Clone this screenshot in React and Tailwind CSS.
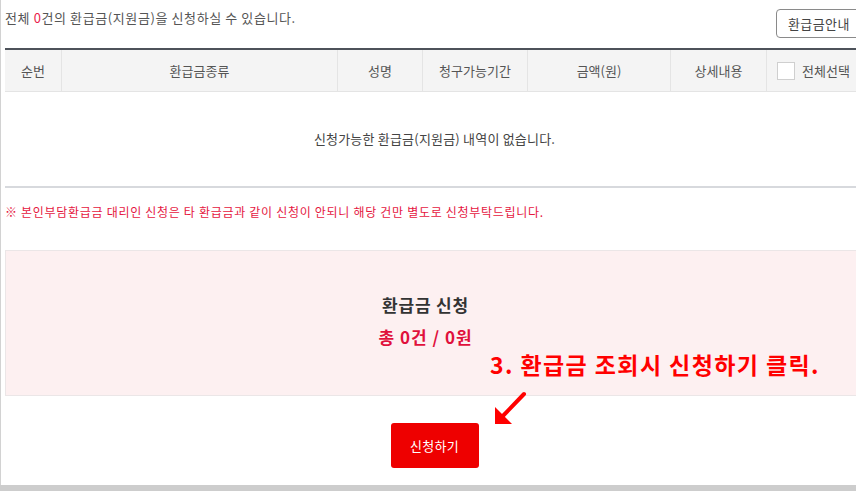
import React from "react";

const font = { fontFamily: '"Noto Sans CJK KR", "Noto Sans", sans-serif' };

export default function App() {
  return (
    <div className="relative w-[856px] h-[491px] overflow-hidden bg-[#cdcdcd] text-[#555]" style={font}>
      <div className="w-[900px] h-[485px] bg-white border-l-[1px] border-[#d2d2d2] pl-[4px]">
        <div className="w-[859px]">
          {/* top row */}
          <div className="flex justify-between items-start h-[38px]">
            <div className="pt-[8px] text-[13px] leading-[20px] tracking-[0.6px] text-[#555]">
              전체 <span className="text-[#ea1c4b]">0</span>건의 환급금(지원금)을 신청하실 수 있습니다.
            </div>
            <div className="mt-[9px] mr-[-12px] h-[29px] w-[100px] border border-[#8a8a8a] rounded-[4px] text-[13px] leading-[27px] pl-[11px] tracking-[0.4px] text-[#444]">
              환급금안내
            </div>
          </div>

          {/* table */}
          <div className="mt-[10px] border-t-2 border-[#4d525a]">
            <div className="flex h-[42px] bg-[#f4f4f4] border-b border-[#e4e4e4] text-[13px] text-[#555]">
              <div className="w-[57px] flex items-center justify-center border-r border-[#e4e4e4]">순번</div>
              <div className="w-[276px] flex items-center justify-center border-r border-[#e4e4e4]">환급금종류</div>
              <div className="w-[85px] flex items-center justify-center border-r border-[#e4e4e4]">성명</div>
              <div className="w-[105px] flex items-center justify-center border-r border-[#e4e4e4]">청구가능기간</div>
              <div className="w-[143px] flex items-center justify-center border-r border-[#e4e4e4]">금액(원)</div>
              <div className="w-[96px] flex items-center justify-center border-r border-[#e4e4e4]">상세내용</div>
              <div className="flex-1 flex items-center pl-[10px]">
                <span className="inline-block w-[18px] h-[18px] bg-white border border-[#cfcfcf] mr-[7px]"></span>
                전체선택
              </div>
            </div>
            <div className="h-[96px] flex items-center justify-center text-[13px] tracking-[0.2px] text-[#444] border-b-2 border-[#d7d9dd]">
              신청가능한 환급금(지원금) 내역이 없습니다.
            </div>
          </div>

          {/* notice */}
          <div className="mt-[15px] text-[12px] leading-[18px] text-[#e5173f] tracking-[0.7px]">
            ※ 본인부담환급금 대리인 신청은 타 환급금과 같이 신청이 안되니 해당 건만 별도로 신청부탁드립니다.
          </div>

          {/* pink box */}
          <div className="mt-[29px] h-[146px] bg-[#fdf0f1] border border-[#ebe6e7] pt-[42px] flex flex-col items-center">
            <div className="mr-[18px] text-[17px] leading-[24px] font-bold tracking-[0.8px] text-[#333]">환급금 신청</div>
            <div className="mr-[18px] mt-[8px] text-[17px] leading-[24px] font-bold tracking-[1px] text-[#e0103c]">총 0건 / 0원</div>
          </div>

          {/* button */}
          <div className="mt-[27px] flex justify-center">
            <div className="w-[88px] h-[45px] bg-[#ee0000] rounded-[3px] text-white text-[13px] tracking-[0.3px] flex items-center justify-center">
              신청하기
            </div>
          </div>
        </div>
      </div>

      {/* annotation */}
      <div className="absolute left-[490px] top-[349px] text-[23px] leading-[30px] font-bold text-[#ff0000] whitespace-nowrap tracking-[1.4px]">
        3.&nbsp;환급금 조회시 신청하기 클릭.
      </div>
      <svg className="absolute left-[490px] top-[390px]" width="40" height="40" viewBox="0 0 40 40">
        <line x1="34" y1="4" x2="9" y2="30" stroke="#ff0000" strokeWidth="4" strokeLinecap="round" />
        <polygon points="5,34 5,17 22,34" fill="#ff0000" />
      </svg>
    </div>
  );
}
